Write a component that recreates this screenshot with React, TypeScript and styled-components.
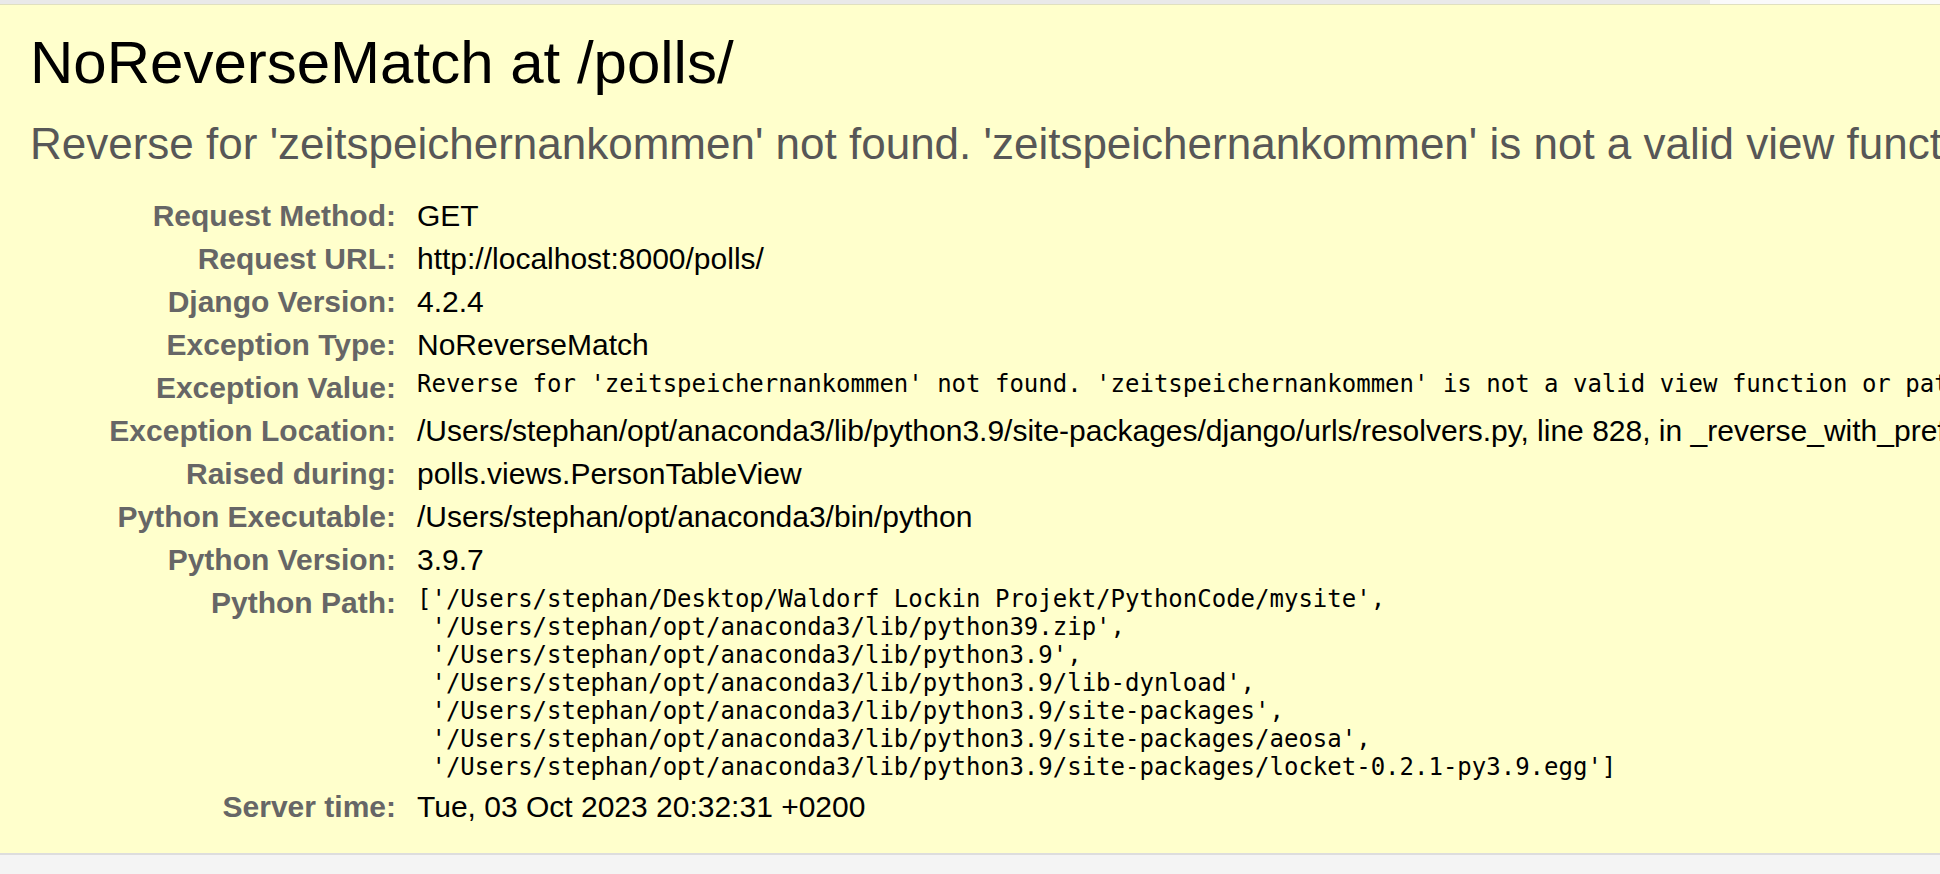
import React from "react";
import styled, { createGlobalStyle } from "styled-components";

const Global = createGlobalStyle`
  html, body {
    margin: 0;
    padding: 0;
    width: 1940px;
    height: 874px;
    overflow: hidden;
    background: #f4f4f4;
  }
  body {
    font-family: "Liberation Sans", Arial, Helvetica, sans-serif;
    font-size: 30px;
    color: #000;
  }
`;

const Page = styled.div`
  display: flex;
  flex-direction: column;
  width: 1940px;
  height: 874px;
`;

const TopStrip = styled.div`
  display: flex;
  height: 4px;
  border-bottom: 1px solid #e0e0c0;
`;

const StripPart = styled.div<{ $light?: boolean }>`
  flex: ${(p) => (p.$light ? "0 0 230px" : "1 1 auto")};
  background: ${(p) => (p.$light ? "#fafafa" : "#e9e9e9")};
`;

const Summary = styled.section`
  background: #ffffcc;
  border-bottom: 2px solid #dddddd;
  padding: 23px 0 25px 30px;
  white-space: nowrap;
  overflow: hidden;
`;

const Title = styled.h1`
  margin: 0;
  font-size: 60px;
  font-weight: normal;
  line-height: 69px;
  color: #000;
`;

const ExceptionText = styled.div`
  margin: 21px 0 0 0;
  font-size: 44px;
  line-height: 51px;
  color: #575757;
`;

const Meta = styled.div`
  display: grid;
  grid-template-columns: 366px auto;
  column-gap: 21px;
  margin-top: 25px;
`;

const Label = styled.div`
  font-weight: bold;
  color: #666;
  text-align: right;
  line-height: 35px;
  padding: 4px 0;
`;

const Value = styled.div`
  line-height: 35px;
  padding: 4px 0;
  color: #000;
`;

const MonoValue = styled.pre`
  margin: 0;
  padding: 4px 0;
  font-family: "DejaVu Sans Mono", "Liberation Mono", monospace;
  font-size: 24px;
  line-height: 28px;
  color: #000;
  white-space: pre;
`;

const pythonPath = [
  "['/Users/stephan/Desktop/Waldorf Lockin Projekt/PythonCode/mysite',",
  " '/Users/stephan/opt/anaconda3/lib/python39.zip',",
  " '/Users/stephan/opt/anaconda3/lib/python3.9',",
  " '/Users/stephan/opt/anaconda3/lib/python3.9/lib-dynload',",
  " '/Users/stephan/opt/anaconda3/lib/python3.9/site-packages',",
  " '/Users/stephan/opt/anaconda3/lib/python3.9/site-packages/aeosa',",
  " '/Users/stephan/opt/anaconda3/lib/python3.9/site-packages/locket-0.2.1-py3.9.egg']",
].join("\n");

type Row = { label: string; value: string; mono?: boolean };

const rows: Row[] = [
  { label: "Request Method:", value: "GET" },
  { label: "Request URL:", value: "http://localhost:8000/polls/" },
  { label: "Django Version:", value: "4.2.4" },
  { label: "Exception Type:", value: "NoReverseMatch" },
  {
    label: "Exception Value:",
    value:
      "Reverse for 'zeitspeichernankommen' not found. 'zeitspeichernankommen' is not a valid view function or pattern name.",
    mono: true,
  },
  {
    label: "Exception Location:",
    value:
      "/Users/stephan/opt/anaconda3/lib/python3.9/site-packages/django/urls/resolvers.py, line 828, in _reverse_with_prefix",
  },
  { label: "Raised during:", value: "polls.views.PersonTableView" },
  { label: "Python Executable:", value: "/Users/stephan/opt/anaconda3/bin/python" },
  { label: "Python Version:", value: "3.9.7" },
  { label: "Python Path:", value: pythonPath, mono: true },
  { label: "Server time:", value: "Tue, 03 Oct 2023 20:32:31 +0200" },
];

export default function App() {
  return (
    <Page>
      <Global />
      <TopStrip>
        <StripPart />
        <StripPart $light />
      </TopStrip>
      <Summary>
        <Title>NoReverseMatch at /polls/</Title>
        <ExceptionText>
          Reverse for 'zeitspeichernankommen' not found. 'zeitspeichernankommen' is not a valid view function or pattern name.
        </ExceptionText>
        <Meta>
          {rows.map((r) => (
            <React.Fragment key={r.label}>
              <Label>{r.label}</Label>
              {r.mono ? <MonoValue>{r.value}</MonoValue> : <Value>{r.value}</Value>}
            </React.Fragment>
          ))}
        </Meta>
      </Summary>
    </Page>
  );
}
